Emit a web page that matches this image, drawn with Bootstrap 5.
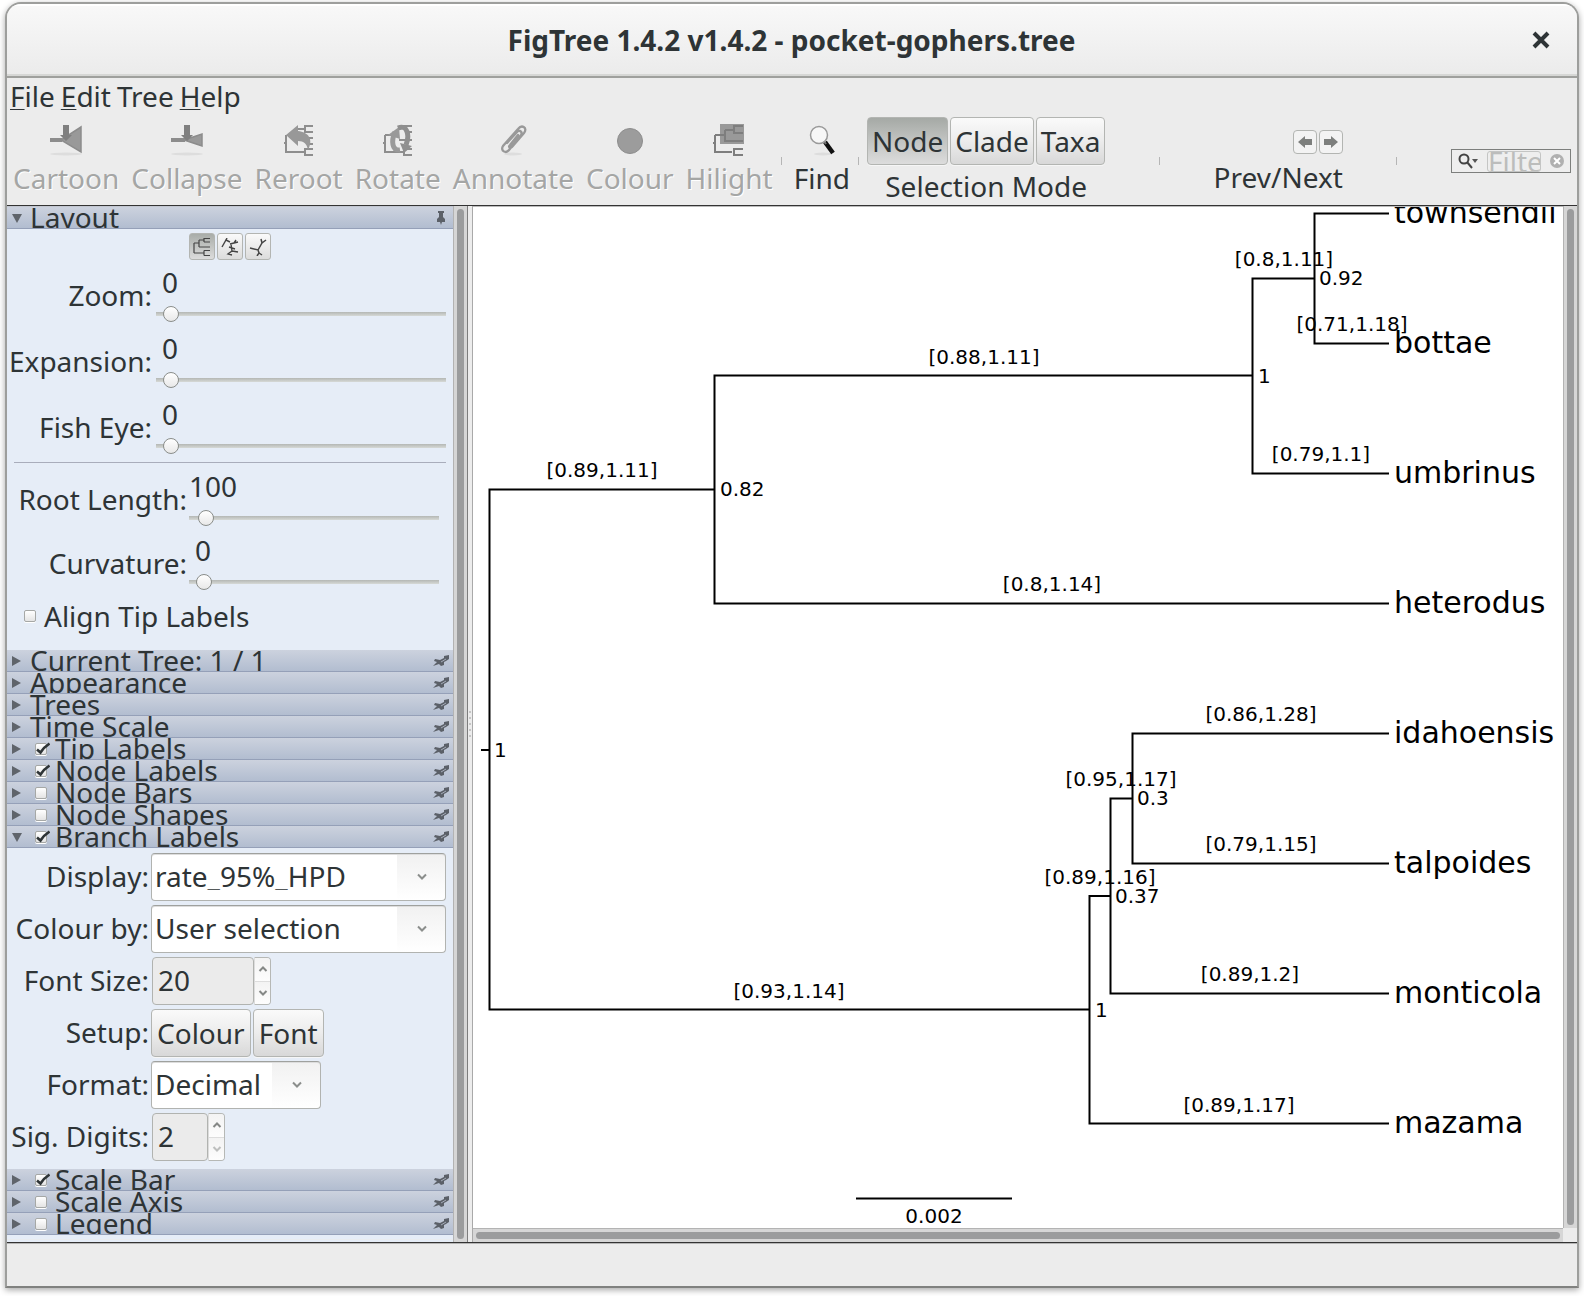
<!DOCTYPE html>
<html lang="en">
<head>
<meta charset="utf-8">
<meta name="viewport" content="width=device-width, initial-scale=1">
<title>FigTree 1.4.2 v1.4.2 - pocket-gophers.tree</title>
<link rel="stylesheet" href="https://cdn.jsdelivr.net/npm/bootstrap@5.3.0/dist/css/bootstrap.min.css">
<style>
:root { --ink: #2e3436; --chrome: #ececec; --panel: #e6edf7; --edge: #b6b8b5; }
body { background: #fff; color: var(--ink); font-family: "Noto Sans", "Open Sans", sans-serif; font-size: 28px; line-height: 28px; }
button, input, select { font: inherit; color: inherit; }
button { padding: 0; }
.app-window { margin: 2px 5px 9px; border: 2px solid #9d9e9c; border-bottom-color: #80817f; border-radius: 16px 16px 0 0; background: var(--chrome); box-shadow: 0 2px 6px rgba(0,0,0,.35); overflow: hidden; }
.title-bar { height: 74px; padding: 0 27px 2px 44px; background: linear-gradient(#f8f8f8, #ebebeb); border-top: 2px solid #fff; border-bottom: 2px solid #9fa09d; box-shadow: inset 0 -2px #d6d7d5; }
.title-bar h1 { font-size: 28px; font-weight: 700; line-height: 32px; }
.bare { border: 0; background: none; line-height: 0; }
.menu-bar { padding: 4px 3px 2px; gap: 6px; }
.menu-bar a { color: var(--ink); text-decoration: none; }
.menu-bar u { text-decoration-thickness: 1px; text-underline-offset: 2px; }

.tool-bar { height: 93px; padding: 3px 4px 0 0; }
.tool { border: 0; background: none; padding: 9px 6px 0; color: var(--ink); display: flex; flex-direction: column; align-items: center; gap: 8px; }
.tool:disabled { color: #a5a6a5; text-shadow: 1px 1px #fff; }
.tool svg { height: 32px; }
.tick { width: 1px; height: 8px; margin-top: 42px; background: #b5b5b5; }
.tick.snug { margin-left: 2px; margin-right: 6px; }
.twin { gap: 2px; }
.push-btn { border: 1px solid #b3b5b2; border-radius: 4px; background: linear-gradient(#fafafa, #ececec 50%, #d8d8d8); box-shadow: 0 1px #f6f6f6; height: 48px; padding: 0 5px; }
.tool-bar .push-btn { padding: 0 4px; }
.mode-group { padding-top: 2px; margin-left: 2px; }
.mode-cap { padding-top: 7px; }
.push-btn.pressed { background: linear-gradient(#a5a9a5, #c2c4c2 50%, #dcdcdc); }
.arrow-btn { width: 24px; height: 24px; border: 1px solid #b3b5b2; border-radius: 4px; background: #f3f3f3; line-height: 0; }
.step-group { padding-top: 15px; }
.step-group .twin { margin-bottom: 9px; }
.find-box { width: 120px; height: 24px; margin-top: 34px; margin-right: 2px; padding: 0 6px; border: 1px solid #7d7f7d; background: #eee; }
.find-box input { width: 54px; height: 21px; padding: 0; border: 1px solid #c4c5c4; border-radius: 3px; background: #eee; line-height: 21px; }
.find-box input::placeholder { color: #bcbdbc; opacity: 1; }

.work-area { border-top: 1px solid #333; border-bottom: 1px solid #333; height: 1038px; }
.side-panel { width: 446px; background: var(--panel); border-top: 1px solid #c2c6d0; }
.sect-head { height: 22px; padding: 0 4px 0 5px; background: linear-gradient(#ccd2de, #b2bdd0); border-bottom: 1px solid #95a0b8; overflow: hidden; }
.sect-name { line-height: 20px; height: 21px; margin-left: 8px; }
.sect-head .bare { width: 10px; height: 12px; }
.sect-head .bare.pin { width: 16px; height: 16px; }
.tick-box { appearance: none; position: relative; width: 12px; height: 12px; margin: 0; border: 1px solid #a6a8a6; border-radius: 2px; background: linear-gradient(#fff, #e4e4e4); box-shadow: 0 1px #fff; flex: none; }
.sect-head .tick-box { margin-left: 13px; }
.tick-box:checked::after { content: ""; position: absolute; left: 0; top: -2px; width: 14px; height: 13px; background: url("data:image/svg+xml,%3Csvg xmlns='http://www.w3.org/2000/svg' viewBox='0 0 14 13'%3E%3Cpath d='M1 7.5 L4.5 10.5 Q8 5 13.5 1.5' fill='none' stroke='%232e3436' stroke-width='2.6'/%3E%3C/svg%3E"); }
.layout-body { height: 421px; padding: 4px 0 0; }
.shape-btn { width: 26px; height: 27px; border: 1px solid #b3b5b2; border-radius: 3px; background: linear-gradient(#fafafa, #dcdcdc); line-height: 0; }
.shape-btn.pressed { background: linear-gradient(#a9ada9, #dcdcdc); }
.slide-row { height: 54px; }
.slide-row + .slide-row { margin-top: 12px; }
.slide-row.wide + .slide-row { margin-top: 10px; }
.slide-row label { width: 146px; text-align: right; padding-right: 1px; }
.slide-row .stack { width: 290px; margin-left: 3px; }
.slide-row output { padding-left: 6px; height: 28px; }
.slide-row.wide label { width: 181px; }
.slide-row.wide .stack { width: 250px; margin-left: 1px; }
.slide-row.wide output.long { padding-left: 0; }
.slider { appearance: none; display: block; width: 100%; height: 16px; margin: 0; padding: 0 7px; background: linear-gradient(#b4b7b4, #d6d9d6) center / 100% 4px no-repeat; }
.slider::-webkit-slider-thumb { appearance: none; width: 16px; height: 16px; border: 1px solid #8a8d8a; border-radius: 50%; background: linear-gradient(#fff, #e8e8e8); }
.slider::-moz-range-thumb { width: 14px; height: 14px; border: 1px solid #8a8d8a; border-radius: 50%; background: #f4f4f4; }
.rule { height: 1px; margin: 8px 7px 9px; background: #a9adbb; }
.align-row { margin-top: 12px; padding-left: 17px; gap: 8px; }
.branch-body { height: 321px; padding: 5px 7px 0 0; gap: 4px; }
.set-row { height: 48px; }
.set-row > label, .set-row > .cap { width: 142px; text-align: right; padding-bottom: 2px; margin-right: 2px; }
.combo { appearance: none; height: 48px; padding: 0 50px 2px 3px; border: 1px solid #b1b3b0; border-top-color: #9fa19e; border-radius: 4px; box-shadow: inset 0 1px #ddd;
  background: url("data:image/svg+xml,%3Csvg xmlns='http://www.w3.org/2000/svg' width='10' height='8' viewBox='0 0 10 8'%3E%3Cpath d='M1 1.5 L5 5.5 L9 1.5' fill='none' stroke='%238b8e8c' stroke-width='2'/%3E%3C/svg%3E") right 18px center no-repeat, linear-gradient(#f1f1f1, #fff) right / 48px 100% no-repeat, #fff; }
.combo.narrow { width: 170px; }
.num-box { appearance: textfield; width: 102px; height: 48px; padding: 0 5px 2px; border: 1px solid #b1b3b0; border-radius: 4px; background: #ebebeb; margin-left: 1px; }
.num-box.narrow { width: 56px; }
.num-box::-webkit-inner-spin-button { appearance: none; margin: 0; }
.step-pair { width: 17px; height: 48px; border: 1px solid #b6b8b5; border-left-color: #dcdcdc; border-radius: 0 4px 4px 0; overflow: hidden; }
.step-pair button { flex: 1; background: linear-gradient(#f3f3f3, #fdfdfd); }
.step-pair button + button { border-top: 1px solid #ddd; }

.v-track { width: 14px; background: #d6d6d6; border-left: 1px solid #b3b3b3; padding: 3px 3px; }
.h-track { height: 14px; background: #d6d6d6; border-top: 1px solid #b3b3b3; padding: 3px 3px; }
.corner { height: 14px; }
.thumb { background: #9b9c9d; border-radius: 4px; }
.splitter { width: 6px; background: var(--chrome); border-left: 1px solid #7d7d7d; border-right: 1px solid #a9a9a9; }
.grip i { width: 2px; height: 2px; background: #c4c4c4; }
.tree-view { background: #fff; border-top: 1px solid #bbb; }
.tree-view svg { display: block; font-family: "DejaVu Sans", sans-serif; font-size: 20px; }
.tree-view .tips { font-size: 30px; }
.status-bar { height: 43px; border-top: 1px solid #b5b5b5; }
</style>
<script src="https://cdn.jsdelivr.net/npm/bootstrap@5.3.0/dist/js/bootstrap.bundle.min.js"></script>
</head>
<body>
<svg class="d-none" xmlns="http://www.w3.org/2000/svg">
  <symbol id="shut" viewBox="0 0 10 12"><path d="M0 1v10l9-5z" fill="#5f646b"/></symbol>
  <symbol id="open" viewBox="0 0 10 12"><path d="M0 2h10l-5 9z" fill="#5f646b"/></symbol>
  <symbol id="pin-side" viewBox="0 0 16 14"><path d="M0 12l4-4-3-1 1-2 5 1 4-2V2l5-1v4l-3 2-2 1 0 3-3 1-2-2z" fill="#5b6068"/><path d="M8 8l5-3" stroke="#a4abb8" stroke-width="1"/></symbol>
  <symbol id="pin-down" viewBox="0 0 16 14"><path d="M5 0h6v2h-1v4l2 2v3H9l-1 3-1-3H4V8l2-2V2H5z" fill="#5b6068"/></symbol>
  <symbol id="up" viewBox="0 0 10 8"><path d="M1.500 6L5 2.500 8.500 6" fill="none" stroke="#858886" stroke-width="2"/></symbol>
  <symbol id="down" viewBox="0 0 10 8"><path d="M1.500 2L5 5.500 8.500 2" fill="none" stroke="#858886" stroke-width="2"/></symbol>
</svg>

<main class="app-window">
  <header class="title-bar d-flex align-items-center">
    <h1 class="flex-grow-1 text-center m-0">FigTree 1.4.2 v1.4.2 - pocket-gophers.tree</h1>
    <button class="bare" type="button" aria-label="Close"><svg width="18" height="18" viewBox="0 0 18 18"><path d="M2 2l14 14M16 2L2 16" stroke="#2e3436" stroke-width="4"/></svg></button>
  </header>

  <nav class="menu-bar d-flex">
    <a href="#"><u>F</u>ile</a><a href="#"><u>E</u>dit</a><a href="#">Tree</a><a href="#"><u>H</u>elp</a>
  </nav>

  <div class="tool-bar d-flex align-items-start">
    <button class="tool" type="button" disabled>
      <svg width="32" viewBox="0 0 32 32"><ellipse cx="16" cy="30" rx="16" ry="1.500" fill="#ddd"/><path d="M0 16h12" stroke="#8c8c8c" stroke-width="4"/><path d="M11 16L31 3v25z" fill="#999" stroke="#8c8c8c" stroke-width="1.500"/><path d="M13 1h6v10h3l-6 6-6-6h3z" fill="#7f7f7f"/></svg>
      Cartoon</button>
    <button class="tool" type="button" disabled>
      <svg width="32" viewBox="0 0 32 32"><ellipse cx="16" cy="30" rx="16" ry="1.500" fill="#ddd"/><path d="M0 16h14" stroke="#8c8c8c" stroke-width="4"/><path d="M13 16L31 10v12z" fill="#999" stroke="#8c8c8c" stroke-width="1.500"/><path d="M13 1h6v10h3l-6 6-6-6h3z" fill="#7f7f7f"/></svg>
      Collapse</button>
    <button class="tool" type="button" disabled>
      <svg width="30" viewBox="0 0 30 32"><path d="M2 11v17h18M0 19h2M29 25h-8v6h8M29 2h-8v6h8M14 5h7M21 14h8M24 20h5" fill="none" stroke="#8e8e8e" stroke-width="2"/><path d="M2 11L14 1v6c10 1 16 8 10 19-1-6-4-9-10-9v5z" fill="#989898"/></svg>
      Reroot</button>
    <button class="tool" type="button" disabled>
      <svg width="30" viewBox="0 0 30 32"><path d="M2 11v17h18M0 19h2M2 11h7M29 25h-8v6h8M18 2h11M22 8h7M16 16h13" fill="none" stroke="#8e8e8e" stroke-width="2"/><path d="M17 26C9 27 8 17 12 8" fill="none" stroke="#999" stroke-width="5"/><path d="M5 11l11-8 1 12z" fill="#999"/><path d="M15 4c9-4 12 7 8 17" fill="none" stroke="#8f8f8f" stroke-width="5"/><path d="M17 19l12 3-8 7z" fill="#8f8f8f"/></svg>
      Rotate</button>
    <button class="tool" type="button" disabled>
      <svg width="30" viewBox="0 0 30 32"><ellipse cx="15" cy="30" rx="9" ry="1.500" fill="#ddd"/><path d="M9 19L19 8c2-3 6 0 4 3L11 26c-3 4-9 1-6-4L20 5c4-5 10-1 6 4L14 23c-2 2-4 0-2-2l8-10" fill="none" stroke="#999" stroke-width="2.300" stroke-linecap="round"/></svg>
      Annotate</button>
    <button class="tool" type="button" disabled>
      <svg width="32" viewBox="0 0 32 32"><circle cx="16" cy="17" r="12.500" fill="#9c9c9c" stroke="#8d8d8d"/></svg>
      Colour</button>
    <button class="tool" type="button" disabled>
      <svg width="32" viewBox="0 0 32 32"><path d="M7 0h24v20H7z" fill="#999"/><path d="M2 11v17h17M0 19h2M2 11h10M30 25h-9v6h9M12 6v11h18M12 6h8M30 2h-9v7h9" fill="none" stroke="#7e7e7e" stroke-width="2"/></svg>
      Hilight</button>
    <span class="tick snug"></span>
    <button class="tool" type="button">
      <svg width="28" viewBox="0 0 28 32"><ellipse cx="15" cy="30" rx="9" ry="1.500" fill="#ddd"/><path d="M17 18l8 11" stroke="#111" stroke-width="4.500"/><path d="M15 16l3 4" stroke="#777" stroke-width="2"/><circle cx="11" cy="11" r="8.500" fill="#f7f7f7" stroke="#9a9a9a" stroke-width="1.500"/></svg>
      Find</button>
    <span class="tick snug"></span>
    <div class="mode-group text-center">
      <div class="twin d-flex">
        <button class="push-btn pressed" type="button">Node</button><button class="push-btn" type="button">Clade</button><button class="push-btn" type="button">Taxa</button>
      </div>
      <div class="mode-cap">Selection Mode</div>
    </div>
    <span class="flex-grow-1"></span><span class="tick"></span><span class="flex-grow-1"></span>
    <div class="step-group">
      <div class="twin d-flex justify-content-end">
        <button class="arrow-btn" type="button" aria-label="Previous"><svg width="16" height="14" viewBox="0 0 16 14"><path d="M1 7l7-6v3h7v6H8v3z" fill="#7d7f7d"/></svg></button>
        <button class="arrow-btn" type="button" aria-label="Next"><svg width="16" height="14" viewBox="0 0 16 14"><path d="M15 7L8 1v3H1v6h7v3z" fill="#7d7f7d"/></svg></button>
      </div>
      <div>Prev/Next</div>
    </div>
    <span class="flex-grow-1"></span><span class="tick"></span><span class="flex-grow-1"></span>
    <div class="find-box d-flex align-items-center justify-content-between">
      <svg width="20" height="16" viewBox="0 0 20 16"><circle cx="6" cy="6" r="4.500" fill="none" stroke="#444" stroke-width="2"/><path d="M9 9l5 6" stroke="#444" stroke-width="2"/><path d="M14 6h6l-3 4z" fill="#555"/></svg>
      <input type="text" placeholder="Filter" aria-label="Filter">
      <button class="bare" type="button" aria-label="Clear filter"><svg width="14" height="14" viewBox="0 0 14 14"><circle cx="7" cy="7" r="7" fill="#b0b0b0"/><path d="M4 4l6 6M10 4l-6 6" stroke="#fff" stroke-width="2"/></svg></button>
    </div>
  </div>

  <div class="work-area d-flex">
    <aside class="side-panel flex-shrink-0">
      <div class="sect-head d-flex align-items-center"><button class="bare" type="button" aria-label="Collapse Layout"><svg width="10" height="12"><use href="#open"/></svg></button><span class="sect-name flex-grow-1">Layout</span><button class="bare pin" type="button" aria-label="Pin"><svg width="16" height="14"><use href="#pin-down"/></svg></button></div>
      <div class="layout-body">
        <div class="twin d-flex justify-content-center mb-2">
          <button class="shape-btn pressed" type="button" aria-label="Rectangular tree"><svg width="18" height="18" viewBox="0 0 18 18"><path d="M1 5v10M1 5h5M6 2v7M6 2h5M6 9h11M11 4V0.500h6M11 4h6M1 15h10M11 12.500v5M11 12.500h6M11 17.500h6" fill="none" stroke="#444" stroke-width="1.200"/></svg></button>
          <button class="shape-btn" type="button" aria-label="Polar tree"><svg width="18" height="18" viewBox="0 0 18 18"><path d="M1 9l4-7 4 2M5 2l1-2M9 6l4-1 4-1M10 6l1 7M8 9l6 2M11 13l-4 3 4 1M11 13l6 1M13 5l2-3" fill="none" stroke="#444" stroke-width="1.400"/></svg></button>
          <button class="shape-btn" type="button" aria-label="Radial tree"><svg width="18" height="18" viewBox="0 0 18 18"><path d="M1 10l8 2 4-7 4-3M13 5l-1-4M9 12l1 3-2 3M10 15l3 2" fill="none" stroke="#444" stroke-width="1.500"/></svg></button>
        </div>
        <div class="slide-row d-flex align-items-center"><label for="zoom">Zoom:</label><div class="stack d-flex flex-column justify-content-between h-100"><output for="zoom">0</output><input class="slider" id="zoom" type="range" min="0" max="1000" value="0"></div></div>
        <div class="slide-row d-flex align-items-center"><label for="expansion">Expansion:</label><div class="stack d-flex flex-column justify-content-between h-100"><output for="expansion">0</output><input class="slider" id="expansion" type="range" min="0" max="1000" value="0"></div></div>
        <div class="slide-row d-flex align-items-center"><label for="fisheye">Fish Eye:</label><div class="stack d-flex flex-column justify-content-between h-100"><output for="fisheye">0</output><input class="slider" id="fisheye" type="range" min="0" max="1000" value="0"></div></div>
        <div class="rule"></div>
        <div class="slide-row wide d-flex align-items-center"><label for="rootlen">Root Length:</label><div class="stack d-flex flex-column justify-content-between h-100"><output class="long" for="rootlen">100</output><input class="slider" id="rootlen" type="range" min="0" max="10000" value="100"></div></div>
        <div class="slide-row wide d-flex align-items-center"><label for="curve">Curvature:</label><div class="stack d-flex flex-column justify-content-between h-100"><output for="curve">0</output><input class="slider" id="curve" type="range" min="0" max="1000" value="0"></div></div>
        <div class="align-row d-flex align-items-center"><input class="tick-box" id="align" type="checkbox"><label for="align">Align Tip Labels</label></div>
      </div>

      <div class="sect-head d-flex align-items-center"><button class="bare" type="button" aria-label="Expand"><svg width="10" height="12"><use href="#shut"/></svg></button><span class="sect-name flex-grow-1">Current Tree: 1 / 1</span><button class="bare pin" type="button" aria-label="Pin"><svg width="16" height="14"><use href="#pin-side"/></svg></button></div>
      <div class="sect-head d-flex align-items-center"><button class="bare" type="button" aria-label="Expand"><svg width="10" height="12"><use href="#shut"/></svg></button><span class="sect-name flex-grow-1">Appearance</span><button class="bare pin" type="button" aria-label="Pin"><svg width="16" height="14"><use href="#pin-side"/></svg></button></div>
      <div class="sect-head d-flex align-items-center"><button class="bare" type="button" aria-label="Expand"><svg width="10" height="12"><use href="#shut"/></svg></button><span class="sect-name flex-grow-1">Trees</span><button class="bare pin" type="button" aria-label="Pin"><svg width="16" height="14"><use href="#pin-side"/></svg></button></div>
      <div class="sect-head d-flex align-items-center"><button class="bare" type="button" aria-label="Expand"><svg width="10" height="12"><use href="#shut"/></svg></button><span class="sect-name flex-grow-1">Time Scale</span><button class="bare pin" type="button" aria-label="Pin"><svg width="16" height="14"><use href="#pin-side"/></svg></button></div>
      <div class="sect-head d-flex align-items-center"><button class="bare" type="button" aria-label="Expand"><svg width="10" height="12"><use href="#shut"/></svg></button><input class="tick-box" id="c1" type="checkbox" checked><label class="sect-name flex-grow-1" for="c1">Tip Labels</label><button class="bare pin" type="button" aria-label="Pin"><svg width="16" height="14"><use href="#pin-side"/></svg></button></div>
      <div class="sect-head d-flex align-items-center"><button class="bare" type="button" aria-label="Expand"><svg width="10" height="12"><use href="#shut"/></svg></button><input class="tick-box" id="c2" type="checkbox" checked><label class="sect-name flex-grow-1" for="c2">Node Labels</label><button class="bare pin" type="button" aria-label="Pin"><svg width="16" height="14"><use href="#pin-side"/></svg></button></div>
      <div class="sect-head d-flex align-items-center"><button class="bare" type="button" aria-label="Expand"><svg width="10" height="12"><use href="#shut"/></svg></button><input class="tick-box" id="c3" type="checkbox"><label class="sect-name flex-grow-1" for="c3">Node Bars</label><button class="bare pin" type="button" aria-label="Pin"><svg width="16" height="14"><use href="#pin-side"/></svg></button></div>
      <div class="sect-head d-flex align-items-center"><button class="bare" type="button" aria-label="Expand"><svg width="10" height="12"><use href="#shut"/></svg></button><input class="tick-box" id="c4" type="checkbox"><label class="sect-name flex-grow-1" for="c4">Node Shapes</label><button class="bare pin" type="button" aria-label="Pin"><svg width="16" height="14"><use href="#pin-side"/></svg></button></div>
      <div class="sect-head d-flex align-items-center"><button class="bare" type="button" aria-label="Collapse"><svg width="10" height="12"><use href="#open"/></svg></button><input class="tick-box" id="c5" type="checkbox" checked><label class="sect-name flex-grow-1" for="c5">Branch Labels</label><button class="bare pin" type="button" aria-label="Pin"><svg width="16" height="14"><use href="#pin-side"/></svg></button></div>

      <div class="branch-body d-flex flex-column">
        <div class="set-row d-flex align-items-center"><label for="display">Display:</label><select class="combo flex-grow-1" id="display"><option>rate_95%_HPD</option></select></div>
        <div class="set-row d-flex align-items-center"><label for="colourby">Colour by:</label><select class="combo flex-grow-1" id="colourby"><option>User selection</option></select></div>
        <div class="set-row d-flex align-items-center"><label for="fontsize">Font Size:</label><input class="num-box" id="fontsize" type="number" value="20"><div class="step-pair d-flex flex-column"><button class="bare" type="button" aria-label="Increase font size"><svg width="10" height="8"><use href="#up"/></svg></button><button class="bare" type="button" aria-label="Decrease font size"><svg width="10" height="8"><use href="#down"/></svg></button></div></div>
        <div class="set-row d-flex align-items-center"><span class="cap">Setup:</span><div class="twin d-flex"><button class="push-btn" type="button">Colour</button><button class="push-btn" type="button">Font</button></div></div>
        <div class="set-row d-flex align-items-center"><label for="format">Format:</label><select class="combo narrow" id="format"><option>Decimal</option></select></div>
        <div class="set-row d-flex align-items-center"><label for="digits">Sig. Digits:</label><input class="num-box narrow" id="digits" type="number" value="2"><div class="step-pair d-flex flex-column"><button class="bare" type="button" aria-label="Increase digits"><svg width="10" height="8"><use href="#up"/></svg></button><button class="bare" type="button" aria-label="Decrease digits" disabled><svg class="opacity-50" width="10" height="8"><use href="#down"/></svg></button></div></div>
      </div>

      <div class="sect-head d-flex align-items-center"><button class="bare" type="button" aria-label="Expand"><svg width="10" height="12"><use href="#shut"/></svg></button><input class="tick-box" id="c6" type="checkbox" checked><label class="sect-name flex-grow-1" for="c6">Scale Bar</label><button class="bare pin" type="button" aria-label="Pin"><svg width="16" height="14"><use href="#pin-side"/></svg></button></div>
      <div class="sect-head d-flex align-items-center"><button class="bare" type="button" aria-label="Expand"><svg width="10" height="12"><use href="#shut"/></svg></button><input class="tick-box" id="c7" type="checkbox"><label class="sect-name flex-grow-1" for="c7">Scale Axis</label><button class="bare pin" type="button" aria-label="Pin"><svg width="16" height="14"><use href="#pin-side"/></svg></button></div>
      <div class="sect-head d-flex align-items-center"><button class="bare" type="button" aria-label="Expand"><svg width="10" height="12"><use href="#shut"/></svg></button><input class="tick-box" id="c8" type="checkbox"><label class="sect-name flex-grow-1" for="c8">Legend</label><button class="bare pin" type="button" aria-label="Pin"><svg width="16" height="14"><use href="#pin-side"/></svg></button></div>
      <div class="border-bottom border-secondary-subtle pt-1"></div>
    </aside>
    <div class="v-track flex-shrink-0"><div class="thumb h-100"></div></div>
    <div class="splitter grip flex-shrink-0 d-flex flex-column align-items-center justify-content-center gap-1"><i></i><i></i><i></i><i></i><i></i></div>

    <div class="flex-grow-1 d-flex flex-column overflow-hidden">
      <div class="tree-view flex-grow-1 overflow-hidden">
        <svg width="1088" height="1021" viewBox="473 207 1088 1021">
          <g fill="none" stroke="#000" stroke-width="2">
            <path d="M481 750H489.500M714.500 489.500H489.500V1009.500H1089.500"/>
            <path d="M1252.500 375.500H714.500V603.500H1389"/>
            <path d="M1314.500 278.500H1252.500V473.500H1389"/>
            <path d="M1389 213.500H1314.500V343.500H1389"/>
            <path d="M1110.500 896H1089.500V1123.500H1389"/>
            <path d="M1132.500 798.500H1110.500V993.500H1389"/>
            <path d="M1389 733.500H1132.500V863.500H1389"/>
            <path d="M856 1198.500H1012"/>
          </g>
          <g class="tips">
            <text x="1394" y="223">townsendii</text><text x="1394" y="353">bottae</text><text x="1394" y="483">umbrinus</text><text x="1394" y="613">heterodus</text>
            <text x="1394" y="743">idahoensis</text><text x="1394" y="873">talpoides</text><text x="1394" y="1003">monticola</text><text x="1394" y="1133">mazama</text>
          </g>
          <g>
            <text x="494" y="757">1</text><text x="720" y="496">0.82</text><text x="1258" y="383">1</text><text x="1319" y="285">0.92</text>
            <text x="1137" y="805">0.3</text><text x="1115" y="903">0.37</text><text x="1095" y="1017">1</text>
          </g>
          <g text-anchor="middle">
            <text x="602" y="477">[0.89,1.11]</text><text x="984" y="364">[0.88,1.11]</text><text x="1284" y="266">[0.8,1.11]</text><text x="1352" y="331">[0.71,1.18]</text>
            <text x="1321" y="461">[0.79,1.1]</text><text x="1052" y="591">[0.8,1.14]</text><text x="1261" y="721">[0.86,1.28]</text><text x="1121" y="786">[0.95,1.17]</text>
            <text x="1261" y="851">[0.79,1.15]</text><text x="1100" y="884">[0.89,1.16]</text><text x="1250" y="981">[0.89,1.2]</text><text x="789" y="998">[0.93,1.14]</text>
            <text x="1239" y="1112">[0.89,1.17]</text><text x="934" y="1223">0.002</text>
          </g>
        </svg>
      </div>
      <div class="h-track"><div class="thumb h-100"></div></div>
    </div>
    <div class="flex-shrink-0 d-flex flex-column"><div class="v-track flex-grow-1"><div class="thumb h-100"></div></div><div class="corner"></div></div>
  </div>
  <footer class="status-bar"></footer>
</main>
</body>
</html>
